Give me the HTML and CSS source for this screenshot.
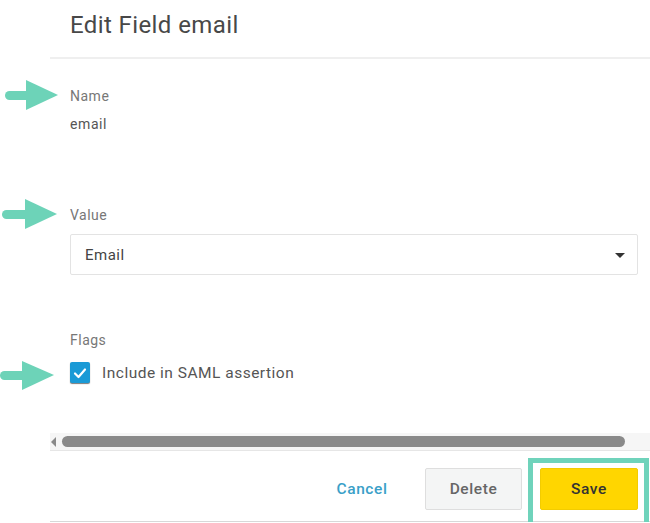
FILE: index.html
```html
<!DOCTYPE html>
<html>
<head>
<meta charset="utf-8">
<link rel="stylesheet" href="styles.css">
</head>
<body>
<div class="dialog">
  <div class="header"><h1 class="title">Edit Field email</h1></div>
  <div class="content">
    <div class="field field-name">
      <svg class="arrow" width="56" height="30" viewBox="0 0 56 30"><rect x="3" y="11" width="26" height="9" rx="4.5" fill="#6dd3b8"/><polygon points="24,0 56,15 24,30" fill="#6dd3b8"/></svg>
      <div class="label">Name</div>
      <div class="value">email</div>
    </div>
    <div class="field field-value">
      <svg class="arrow" width="56" height="30" viewBox="0 0 56 30"><rect x="1" y="11" width="28" height="9" rx="4.5" fill="#6dd3b8"/><polygon points="24,0 56,15 24,30" fill="#6dd3b8"/></svg>
      <div class="label">Value</div>
      <div class="select"><span>Email</span><span class="caret"></span></div>
    </div>
    <div class="field field-flags">
      <div class="label">Flags</div>
      <div class="check-row">
        <svg class="arrow" width="56" height="30" viewBox="0 0 56 30"><rect x="0" y="10" width="28" height="9" rx="4.5" fill="#6dd3b8"/><polygon points="22,0 54,14 22,29" fill="#6dd3b8"/></svg>
        <span class="checkbox"><svg width="20" height="20" viewBox="0 0 20 20"><path d="M5 10.5 L8.5 14 L15 6.5" fill="none" stroke="#fff" stroke-width="2.2" stroke-linecap="round" stroke-linejoin="round"/></svg></span>
        <span class="check-label">Include in SAML assertion</span>
      </div>
    </div>
  </div>
  <div class="scrollbar"><span class="scroll-arrow"></span><span class="thumb"></span></div>
  <div class="footer">
    <button class="btn btn-cancel">Cancel</button>
    <button class="btn btn-delete">Delete</button>
    <button class="btn btn-save">Save</button>
    <span class="highlight"></span>
  </div>
</div>
</body>
</html>
```
FILE: styles.css
```css
* { box-sizing: border-box; }
html, body { margin: 0; padding: 0; background: #fff; }
body { font-family: Roboto, "Liberation Sans", sans-serif; color: #555; overflow: hidden; }
.dialog { margin-left: 50px; width: 600px; }
.header { height: 59px; border-bottom: 2px solid #efefef; padding: 0 20px; display: flex; align-items: flex-start; }
.title { margin: 10px 0 0; font-size: 24px; font-weight: 400; color: #484848; line-height: 30px; letter-spacing: 0.4px; }
.content { padding: 0 12px 0 20px; }
.field { position: relative; }
.field-name { margin-top: 27px; }
.field-value { margin-top: 71px; }
.field-flags { margin-top: 55px; }
.arrow { position: absolute; display: block; }
.field-name .arrow { left: -68px; top: -6px; }
.field-value .arrow { left: -69px; top: -6px; }
.label { font-size: 14px; line-height: 20px; color: #777; letter-spacing: 0.5px; }
.value { font-size: 14px; line-height: 20px; color: #555; margin-top: 8px; letter-spacing: 0.6px; }
.select { margin-top: 9px; height: 41px; border: 1px solid #e3e3e3; border-radius: 2px; display: flex; align-items: center; justify-content: space-between; padding: 0 12px 0 14px; font-size: 15px; color: #444; letter-spacing: 0.5px; }
.caret { width: 0; height: 0; border-left: 5px solid transparent; border-right: 5px solid transparent; border-top: 5px solid #333; margin-top: 2px; }
.check-row { position: relative; margin-top: 12px; display: flex; align-items: center; height: 21px; }
.check-row .arrow { left: -70px; top: -1px; }
.checkbox { width: 20px; height: 21px; background: #1a9ad6; border-radius: 2px; box-shadow: 0 1px 1px #7a7a7a; display: flex; align-items: center; justify-content: center; }
.checkbox svg { display: block; }
.check-label { margin-left: 12px; font-size: 15.5px; color: #555; letter-spacing: 0.5px; }
.scrollbar { margin-top: 50px; height: 17px; background: #f6f6f6; display: flex; align-items: center; padding-left: 1px; }
.scroll-arrow { width: 0; height: 0; border-top: 5px solid transparent; border-bottom: 5px solid transparent; border-right: 5px solid #8a8a8a; }
.thumb { margin-left: 6px; width: 563px; height: 11px; border-radius: 6px; background: #8a8a8a; }
.footer { position: relative; border-top: 1px solid #e6e6e6; border-bottom: 1px solid #d8d8d8; height: 72px; display: flex; align-items: flex-start; padding: 17px 0 0 0; }
.btn { font-family: Roboto, "Liberation Sans", sans-serif; font-size: 15.5px; font-weight: 500; height: 42px; border-radius: 2px; border: 1px solid transparent; background: none; padding: 0; cursor: pointer; letter-spacing: 0.6px; }
.btn-cancel { margin-left: 276px; width: 72px; color: #3a9fc8; }
.btn-delete { margin-left: 27px; width: 97px; background: #f4f5f5; border-color: #dedede; color: #666; }
.btn-save { margin-left: 18px; width: 98px; background: #ffd600; border-color: #f3cc00; color: #333; }
.highlight { position: absolute; left: 478px; top: 7px; width: 121px; height: 70px; border: 5px solid #6fd3bb; pointer-events: none; }
```
